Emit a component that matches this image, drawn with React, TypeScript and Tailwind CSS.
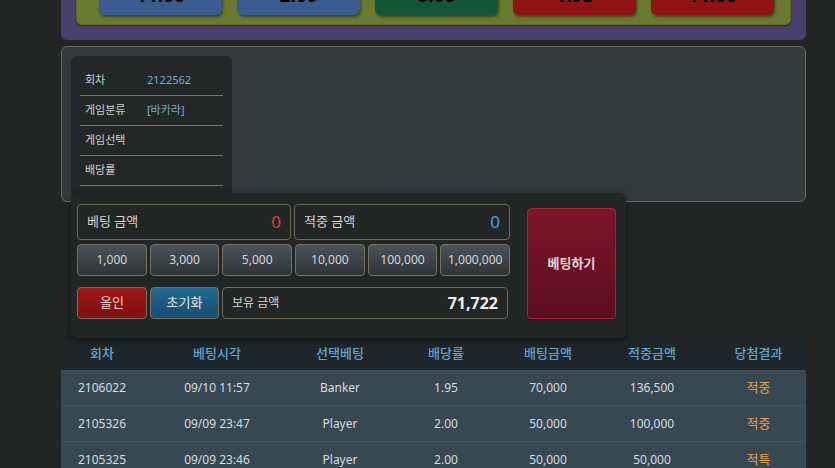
import React from "react";

const odds = [
  { label: "11.00", cls: "bg-[#3a5a90]" },
  { label: "2.00", cls: "bg-[#3a5a90]" },
  { label: "8.00", cls: "bg-[#13573a]" },
  { label: "1.95", cls: "bg-[#901313]" },
  { label: "11.00", cls: "bg-[#901313]" },
];

const info = [
  { k: "회차", v: "2122562" },
  { k: "게임분류", v: "[바카라]" },
  { k: "게임선택", v: "" },
  { k: "배당률", v: "" },
];

const chips = ["1,000", "3,000", "5,000", "10,000", "100,000", "1,000,000"];

const rows = [
  ["2106022", "09/10 11:57", "Banker", "1.95", "70,000", "136,500", "적중"],
  ["2105326", "09/09 23:47", "Player", "2.00", "50,000", "100,000", "적중"],
  ["2105325", "09/09 23:46", "Player", "2.00", "50,000", "50,000", "적특"],
];

const heads = ["회차", "베팅시각", "선택베팅", "배당률", "배팅금액", "적중금액", "당첨결과"];

const cols = "grid grid-cols-[82px_148px_98px_114px_90px_118px_95px]";

export default function App() {
  return (
    <div
      className="h-[468px] overflow-hidden bg-[#232524]"
      style={{ fontFamily: '"Noto Sans", "Noto Sans CJK KR", sans-serif' }}
    >
      <div className="mx-[61px] w-[745px]">
        {/* odds board (scrolled off the top) */}
        <div className="mt-[-57px] rounded-b-md bg-[#4a406c] px-[15px] pt-[15px] pb-[15px]">
          <div className="flex gap-[15px] rounded-md border border-[#5a6a26] bg-[#6a7a30] pl-[22px] pt-3 pb-[9px] shadow-[0_1px_2px_rgba(0,0,0,0.4)]">
            {odds.map((o, i) => (
              <div
                key={i}
                className={`flex h-[44px] w-[123px] items-center justify-center rounded-md pt-[5px] text-[19px] font-bold text-black shadow-[1px_2px_3px_rgba(0,0,0,0.45)] ${o.cls}`}
              >
                {o.label}
              </div>
            ))}
          </div>
        </div>

        {/* game info panel */}
        <div className="mt-[6px] h-[156px] overflow-hidden rounded-md border border-[#6d695b] bg-[#343a3b] pt-[9px] pl-[9px]">
          <div className="w-[161px] rounded-md bg-[#232827] px-[9px] pt-[10px] pb-3">
            {info.map((r) => (
              <div key={r.k} className="flex h-[30px] items-center border-b border-[#7d7666] pl-[5px] text-[11px]">
                <span className="w-[62px] text-[#cfcfcf]">{r.k}</span>
                <span className="text-[#71acd4]">{r.v}</span>
              </div>
            ))}
          </div>
        </div>

        {/* betting panel */}
        <div className="relative z-10 mt-[-9px] ml-[10px] flex w-[555px] gap-[17px] rounded-md bg-[#222625] pt-[11px] pr-[10px] pb-[19px] pl-[6px] shadow-[0_2px_6px_rgba(0,0,0,0.5)]">
          <div className="w-[433px]">
            <div className="flex gap-[3px]">
              <div className="flex h-[36px] w-[214px] items-center justify-between rounded-[4px] border border-[#6d695b] px-[9px]">
                <span className="text-[13px] text-[#d4d4d4]">베팅 금액</span>
                <span className="text-[17px] text-[#e23c3c]">0</span>
              </div>
              <div className="flex h-[36px] w-[216px] items-center justify-between rounded-[4px] border border-[#6d695b] px-[9px]">
                <span className="text-[13px] text-[#d4d4d4]">적중 금액</span>
                <span className="text-[17px] text-[#4a9fe2]">0</span>
              </div>
            </div>
            <div className="mt-[4px] flex gap-[3px]">
              {chips.map((c) => (
                <div
                  key={c}
                  className="flex h-[32px] w-[70px] items-center justify-center rounded-[4px] border border-[#75705f] bg-gradient-to-b from-[#4b5459] to-[#2e3437] text-[12px] text-[#d6d6d6]"
                >
                  {c}
                </div>
              ))}
            </div>
            <div className="mt-[11px] flex gap-[3px]">
              <div className="flex h-[32px] w-[70px] items-center justify-center rounded-[4px] border border-[#75705f] bg-gradient-to-b from-[#9c1613] to-[#801010] text-[13px] text-[#f2d6d6]">
                올인
              </div>
              <div className="flex h-[32px] w-[69px] items-center justify-center rounded-[4px] border border-[#75705f] bg-gradient-to-b from-[#1f6b95] to-[#164d6e] text-[13px] text-[#e2ecf4]">
                초기화
              </div>
              <div className="flex h-[32px] w-[286px] items-center justify-between rounded-[4px] border border-[#6d695b] px-[9px]">
                <span className="text-[12px] text-[#d4d4d4]">보유 금액</span>
                <span className="text-[16px] font-bold text-[#f2f2f2]">71,722</span>
              </div>
            </div>
          </div>
          <div className="mt-[4px] flex h-[111px] w-[89px] items-center justify-center rounded-[4px] border border-[#a02233] bg-gradient-to-b from-[#7e1429] to-[#5c0e1d] text-[13px] font-bold text-[#e6d4d6]">
            베팅하기
          </div>
        </div>

        {/* history table */}
        <div className="text-center">
          <div className={`${cols} h-[32px] items-center bg-[#1f262a] text-[13px] font-medium text-[#5ea5d6]`}>
            {heads.map((h) => (
              <div key={h}>{h}</div>
            ))}
          </div>
          {rows.map((r, i) => (
            <div
              key={i}
              className={`${cols} h-[36px] items-center border-b border-[#2e5872] bg-[#374852] text-[12px] text-[#d5dde1]`}
            >
              {r.map((c, j) => (
                <div key={j} className={j === 6 ? "text-[13px] text-[#e9a63a]" : ""}>
                  {c}
                </div>
              ))}
            </div>
          ))}
        </div>
      </div>
    </div>
  );
}
